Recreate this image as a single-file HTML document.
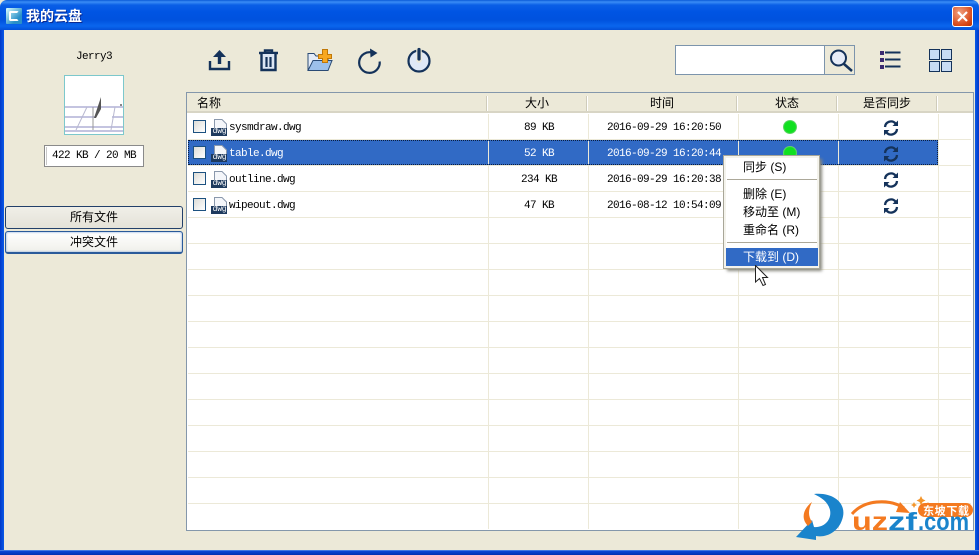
<!DOCTYPE html>
<html><head><meta charset="utf-8"><style>
*{box-sizing:border-box}
html,body{margin:0;padding:0;width:979px;height:555px;overflow:hidden;background:#ece9d8}
.a{position:absolute}
body{font-family:"Liberation Mono","WenQuanYi Zen Hei","Noto Sans CJK SC",monospace;font-size:11px;letter-spacing:-.6px;color:#000;line-height:14px}
.c{font-family:"Liberation Sans","WenQuanYi Zen Hei","Noto Sans CJK SC",sans-serif;font-size:12px;letter-spacing:0}
.ce{text-align:center}
.hl{position:absolute;left:188px;width:783px;height:1px;background:#ece9d8}
.vl{position:absolute;top:114px;height:415px;width:1px;background:#ece9d8}
.hd{position:absolute;top:94px;height:19px;text-align:center;line-height:19px;letter-spacing:0;font-family:"Liberation Sans","WenQuanYi Zen Hei","Noto Sans CJK SC",sans-serif;font-size:12px}
.hs{position:absolute;top:96px;height:15px;background:#cfccbb;border-right:1px solid #fff;width:2px}
.cb{position:absolute;left:193px;width:13px;height:13px;border:1px solid #1c5180;background:linear-gradient(135deg,#dcdcd7,#fff)}
.name{position:absolute;left:229px;height:14px}
.sz{position:absolute;left:489px;width:100px;text-align:center}
.tm{position:absolute;left:589px;width:150px;text-align:center}
.dw{position:absolute;left:212px;width:15px;font-size:8px;line-height:8px;color:#fff;text-align:center;letter-spacing:-.2px}
.dot{position:absolute;left:783px;width:14px;height:14px;border-radius:50%;background:radial-gradient(circle,#10e020 55%,#a8cca8 78%,#dfe8df 100%)}
</style></head><body>
<!-- window frame -->
<div class="a" style="left:0;top:0;width:979px;height:30px;border-radius:7px 7px 0 0;background:linear-gradient(#0a5ad8 0,#3a8cf6 2px,#0a5fe6 5px,#0054e3 12px,#0052de 20px,#0a66ee 26px,#0350d8 30px)"></div>
<div class="a" style="left:0;top:30px;width:4px;height:525px;background:linear-gradient(90deg,#0038c8,#0a5ae8)"></div>
<div class="a" style="right:0;top:30px;width:4px;height:525px;background:linear-gradient(270deg,#0038c8,#0a5ae8)"></div>
<div class="a" style="left:0;bottom:0;width:979px;height:5px;background:linear-gradient(#7aa8e8 0,#0a48d8 1px,#0030b0 100%)"></div>
<!-- title icon -->
<div class="a" style="left:6px;top:8px;width:16px;height:16px;background:linear-gradient(135deg,#dff,#2a90c8 70%);border-radius:1px"></div>
<div class="a" style="left:9px;top:11px;width:10px;height:10px;border:2px solid #fff;border-right-color:transparent;border-radius:2px"></div>
<div class="a c" style="left:26px;top:8px;color:#fff;font-weight:bold;font-size:14px;line-height:16px;text-shadow:1px 1px 0 #0a2a90">我的云盘</div>
<!-- close -->
<div class="a" style="left:952px;top:6px;width:21px;height:21px;border:1px solid #fff;border-radius:3px;background:radial-gradient(circle at 35% 30%,#f0a080,#d84818 70%,#b83000)"></div>
<svg class="a" style="left:952px;top:6px" width="21" height="21"><path d="M6 6L15 15M15 6L6 15" stroke="#fff" stroke-width="2.2"/></svg>

<!-- left panel -->
<div class="a ce" style="left:54px;top:50px;width:80px">Jerry3</div>
<div class="a" style="left:64px;top:75px;width:60px;height:60px;border:1px solid #7cc8cc;background:#fff;overflow:hidden">
<svg width="58" height="58"><path d="M0 31H58M0 41H30M47 41H58M0 51H58M0 55H58" stroke="#c4c4e0" stroke-width="2"/><path d="M22 31L11 54M50 31L46 54" stroke="#b8b8d0"/><path d="M28 31V54" stroke="#999"/><path d="M29 42L36 21V33L31 42Z" fill="#555"/><rect x="55" y="28" width="2" height="2" fill="#888"/></svg></div>
<div class="a ce" style="left:44px;top:145px;width:100px;height:22px;border:1px solid #8a8a8a;background:#fff;line-height:21px">422 KB / 20 MB</div>
<div class="a" style="left:46px;top:147px;width:1px;height:18px;background:#c8c8c8"></div>
<div class="a c ce" style="left:5px;top:206px;width:178px;height:23px;border:1px solid #22406a;border-radius:3px;background:linear-gradient(#f0efe8,#e4e2d8);line-height:20px">所有文件</div>
<div class="a c ce" style="left:5px;top:231px;width:178px;height:23px;border:1px solid #2a5a9a;border-bottom-width:2px;border-radius:3px;box-shadow:inset 0 0 2px #7aa0d8;line-height:20px;background:linear-gradient(#fff,#f0f0ea)">冲突文件</div>

<!-- toolbar -->
<svg class="a" style="left:200px;top:40px" width="240" height="40" fill="none" stroke="#14325a">
<!-- upload -->
<path d="M10 21V29H29V21" stroke-width="2.400"/><path d="M19.500 24V15" stroke-width="3.400"/><path d="M13 17L19.500 10L26 17Z" fill="#14325a" stroke="none"/>
<!-- trash -->
<path d="M59 13H78" stroke-width="2.400"/><path d="M65 12V10.500H72V12" stroke-width="2.400"/><path d="M61.500 14V30H75.500V14" stroke-width="2.400" fill="#dce6f4"/><path d="M66.500 17V27M70.500 17V27" stroke-width="2.200"/>
<!-- folder -->
<path d="M108 30.500V13.500H114L116 16H128V30.500Z" fill="#e4ecf8" stroke="#2a4a74"/>
<path d="M108 30.500L113 20.500H132L128 30.500Z" fill="#9cc0ea" stroke="#2a4a74"/>
<path d="M122.500 9.500H127.500V14.500H131.500V18.500H127.500V22.500H122.500V18.500H118.500V14.500H122.500Z" fill="#f8a820" stroke="#c07808"/>
<!-- refresh -->
<path d="M172.500 12.700A10.300 10.300 0 1 0 179.700 21.500" stroke-width="2.200"/><path d="M170 8.500L177.500 13L170.500 17.500Z" fill="#14325a" stroke="none"/>
<!-- power -->
<circle cx="219" cy="21" r="10.500" fill="#dfe8f6" stroke-width="2.200"/><path d="M219 9V20" stroke-width="5.500" stroke-linecap="round" stroke="#ece9d8"/><path d="M219 9.500V19" stroke-width="3.200" stroke-linecap="round"/>
</svg>

<!-- search -->
<div class="a" style="left:675px;top:45px;width:150px;height:30px;border:1px solid #7c94ac;background:#fff"></div>
<div class="a" style="left:824px;top:45px;width:31px;height:30px;border:1px solid #7c94ac"></div>
<svg class="a" style="left:824px;top:45px" width="31" height="30" fill="none"><circle cx="14.500" cy="13" r="7.500" fill="#e6ecf8" stroke="#14325a" stroke-width="2"/><path d="M20 19L28 26" stroke="#14325a" stroke-width="2.500"/></svg>
<!-- view icons -->
<svg class="a" style="left:875px;top:45px" width="80" height="30">
<rect x="5" y="6" width="4" height="4" fill="#3a2a70"/><rect x="5" y="13" width="4" height="4" fill="#3a2a70"/><rect x="5" y="20" width="4" height="4" fill="#3a2a70"/>
<path d="M10 7.500H25.500M10 14.500H25.500M10 21.500H25.500" stroke="#14325a" stroke-width="2"/>
<g fill="#c8dcf4" stroke="#14325a"><rect x="54.500" y="4.500" width="10" height="10"/><rect x="66.500" y="4.500" width="10" height="10"/><rect x="54.500" y="16.500" width="10" height="10"/><rect x="66.500" y="16.500" width="10" height="10"/></g></svg>

<!-- table -->
<div class="a" style="left:186px;top:92px;width:788px;height:439px;border:1px solid #8497ab;background:#fff"></div>
<div class="a" style="left:187px;top:93px;width:786px;height:20px;background:#ece9d8;border-bottom:2px solid #d8d5c5"></div>
<div class="hd" style="left:197px">名称</div>
<div class="hd" style="left:487px;width:100px">大小</div>
<div class="hd" style="left:587px;width:150px">时间</div>
<div class="hd" style="left:737px;width:100px">状态</div>
<div class="hd" style="left:837px;width:100px">是否同步</div>
<div class="hs" style="left:486px"></div><div class="hs" style="left:586px"></div><div class="hs" style="left:736px"></div><div class="hs" style="left:836px"></div><div class="hs" style="left:936px"></div>

<div class="hl" style="top:139px"></div><div class="hl" style="top:165px"></div><div class="hl" style="top:191px"></div><div class="hl" style="top:217px"></div><div class="hl" style="top:243px"></div><div class="hl" style="top:269px"></div><div class="hl" style="top:295px"></div><div class="hl" style="top:321px"></div><div class="hl" style="top:347px"></div><div class="hl" style="top:373px"></div><div class="hl" style="top:399px"></div><div class="hl" style="top:425px"></div><div class="hl" style="top:451px"></div><div class="hl" style="top:477px"></div><div class="hl" style="top:503px"></div>
<div class="vl" style="left:488px"></div><div class="vl" style="left:588px"></div><div class="vl" style="left:738px"></div><div class="vl" style="left:838px"></div><div class="vl" style="left:938px"></div>

<!-- selected row -->
<div class="a" style="left:188px;top:140px;width:750px;height:25px;background:#316ac5;outline:1px dotted #0a1e40;outline-offset:-1px"></div>
<div class="a" style="left:488px;top:141px;width:1px;height:23px;background:#ece9d8"></div>
<div class="a" style="left:588px;top:141px;width:1px;height:23px;background:#ece9d8"></div>
<div class="a" style="left:738px;top:141px;width:1px;height:23px;background:#ece9d8"></div>
<div class="a" style="left:838px;top:141px;width:1px;height:23px;background:#ece9d8"></div>

<!-- rows -->
<div class="cb" style="top:120px"></div><div class="cb" style="top:146px"></div><div class="cb" style="top:172px"></div><div class="cb" style="top:198px"></div>

<svg width="0" height="0" style="position:absolute"><defs>
<g id="f"><path d="M3.500 .5H11L15.500 5V15.500H3.500Z" fill="#f4f6fa" stroke="#8a98ac"/><rect x="0" y="9" width="16" height="8" fill="#1e3a5e"/></g>
<g id="s" fill="none" stroke="#14325a" stroke-width="2.300"><path d="M2 7A6 6 0 0 1 12.500 3.500"/><path d="M14 9A6 6 0 0 1 3.500 12.500"/><path d="M15 .5V6H9.500Z" fill="#14325a" stroke="none"/><path d="M1 15.500V10H6.500Z" fill="#14325a" stroke="none"/></g>
</defs></svg>
<svg class="a" style="left:211px;top:119px" width="17" height="17"><use href="#f"/></svg>
<svg class="a" style="left:211px;top:145px" width="17" height="17"><use href="#f"/></svg>
<svg class="a" style="left:211px;top:171px" width="17" height="17"><use href="#f"/></svg>
<svg class="a" style="left:211px;top:197px" width="17" height="17"><use href="#f"/></svg>
<div class="dw" style="top:128px">dwg</div>
<div class="dw" style="top:154px">dwg</div>
<div class="dw" style="top:180px">dwg</div>
<div class="dw" style="top:206px">dwg</div>

<div class="name" style="top:121px">sysmdraw.dwg</div>
<div class="name" style="top:147px;color:#fff">table.dwg</div>
<div class="name" style="top:173px">outline.dwg</div>
<div class="name" style="top:199px">wipeout.dwg</div>
<div class="sz" style="top:121px">89 KB</div>
<div class="sz" style="top:147px;color:#fff">52 KB</div>
<div class="sz" style="top:173px">234 KB</div>
<div class="sz" style="top:199px">47 KB</div>
<div class="tm" style="top:121px">2016-09-29 16:20:50</div>
<div class="tm" style="top:147px;color:#fff">2016-09-29 16:20:44</div>
<div class="tm" style="top:173px">2016-09-29 16:20:38</div>
<div class="tm" style="top:199px">2016-08-12 10:54:09</div>

<div class="dot" style="top:120px"></div>
<div class="dot" style="top:146px"></div>
<svg class="a" style="left:883px;top:120px" width="16" height="16"><use href="#s"/></svg>
<svg class="a" style="left:883px;top:146px" width="16" height="16"><use href="#s"/></svg>
<svg class="a" style="left:883px;top:172px" width="16" height="16"><use href="#s"/></svg>
<svg class="a" style="left:883px;top:198px" width="16" height="16"><use href="#s"/></svg>

<!-- context menu -->
<div class="a" style="left:724px;top:156px;width:95px;height:112px;background:#fff;border:2px solid #f4f3ec;outline:1px solid #a8a698;box-shadow:3px 3px 3px #8a8a80"></div>
<div class="a" style="left:727px;top:179px;width:90px;height:1px;background:#aca899"></div>
<div class="a" style="left:727px;top:242px;width:90px;height:1px;background:#aca899"></div>
<div class="a" style="left:726px;top:248px;width:92px;height:18px;background:#316ac5"></div>
<div class="a c" style="left:743px;top:160px;line-height:15px">同步 (S)</div>
<div class="a c" style="left:743px;top:187px;line-height:15px">删除 (E)</div>
<div class="a c" style="left:743px;top:205px;line-height:15px">移动至 (M)</div>
<div class="a c" style="left:743px;top:223px;line-height:15px">重命名 (R)</div>
<div class="a c" style="left:743px;top:250px;line-height:15px;color:#fff">下载到 (D)</div>
<svg class="a" style="left:754px;top:265px" width="16" height="22"><path d="M1.500 .5V17L5.500 13.500L9 20.500L11.500 19.500L8.500 12.500H13.500Z" fill="#fff" stroke="#222"/></svg>

<!-- watermark -->
<svg class="a" style="left:790px;top:490px;letter-spacing:0" width="189" height="60">
<path d="M24 4C44 2 58 14 52 30C48 42 36 48 26 46L26 50L6 47L22 30L24 37C34 38 42 30 40 20C38 12 32 8 24 4Z" fill="#1a84cc"/>
<path d="M22 12C14 18 10 28 18 36L22 32C18 26 18 20 22 12Z" fill="#f47a20"/>
<path d="M62 24C74 10 98 8 114 18" fill="none" stroke="#f47a20" stroke-width="3"/><path d="M110 12L120 23L106 22Z" fill="#f47a20"/>
<path d="M131 6l1.500 3 3 1.500-3 1.500-1.500 3-1.500-3-3-1.500 3-1.500zM124 12l1 2 2 1-2 1-1 2-1-2-2-1 2-1zM138 12l1 2 2 1-2 1-1 2-1-2-2-1 2-1z" fill="#f4952a"/>
<rect x="128" y="13" width="55" height="14" rx="7" fill="#f47a20"/>
<text x="133" y="24.500" font-family="Noto Sans CJK SC,sans-serif" font-size="11" font-weight="bold" fill="#fff" textLength="46">东坡下载</text>
<text x="62" y="40" font-family="Liberation Sans,sans-serif" font-size="25" font-weight="bold" fill="#f47a20" textLength="36" lengthAdjust="spacingAndGlyphs">uz</text>
<text x="98" y="40" font-family="Liberation Sans,sans-serif" font-size="25" font-weight="bold" fill="#1a84cc" textLength="29" lengthAdjust="spacingAndGlyphs">zf</text>
<text x="128" y="40" font-family="Liberation Sans,sans-serif" font-size="25" font-weight="bold" fill="#1a84cc" textLength="51" lengthAdjust="spacingAndGlyphs">.com</text>
</svg>
</body></html>
